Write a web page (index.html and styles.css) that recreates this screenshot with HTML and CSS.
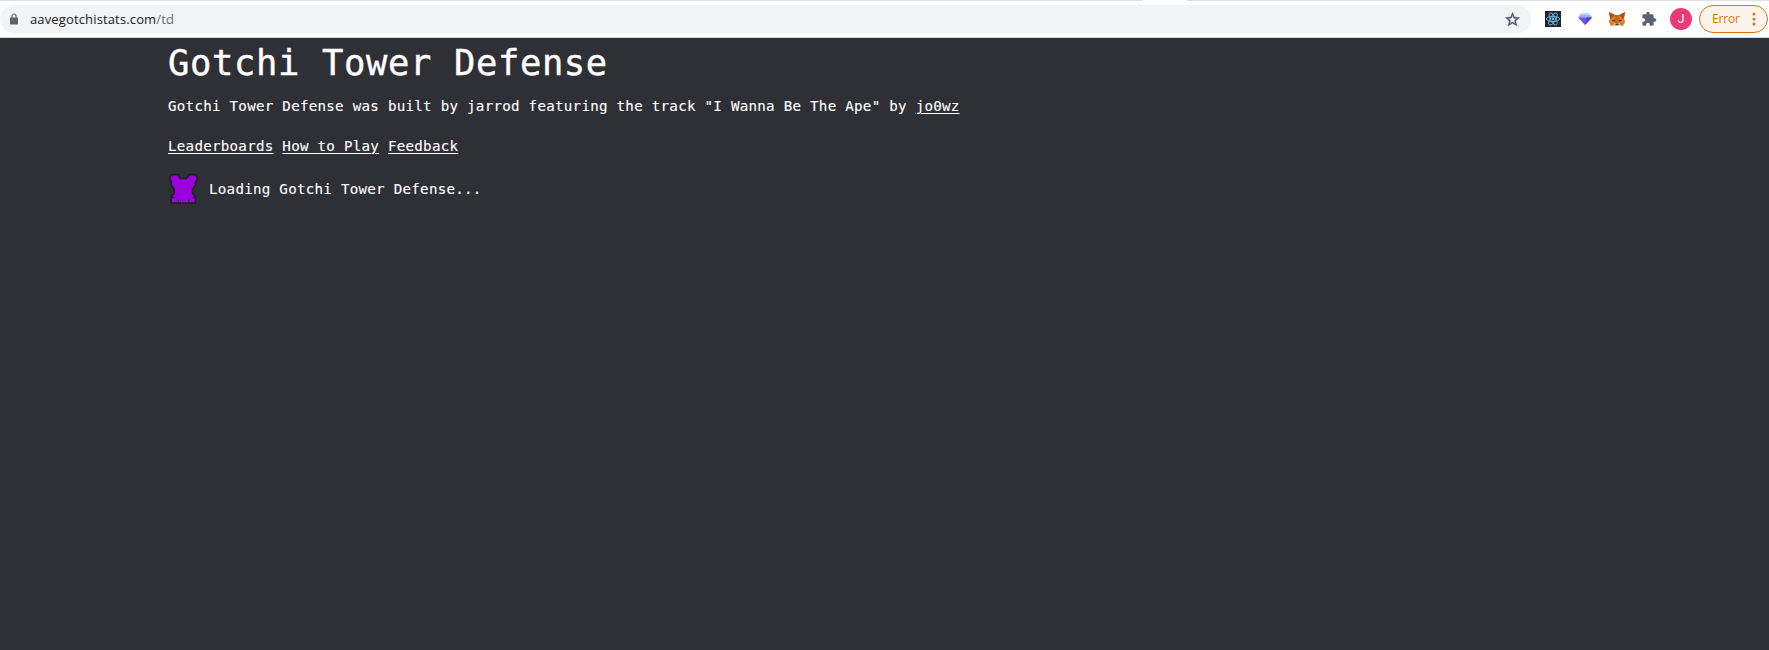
FILE: index.html
```html
<!DOCTYPE html>
<html lang="en">
<head>
<meta charset="utf-8">
<title>Gotchi Tower Defense</title>
<link rel="stylesheet" href="styles.css">
</head>
<body>
<header class="browser">
  <div class="tabs"><span class="tab"></span></div>
  <div class="toolbar">
    <div class="omnibox">
      <svg class="lock" viewBox="0 0 8 12"><path d="M2 5V3a2 2 0 0 1 4 0v2" fill="none" stroke="#5f6368" stroke-width="1.2"/><rect y="4.5" width="8" height="7" rx=".7" fill="#5f6368"/></svg>
      <span class="url">aavegotchistats.com<span class="path">/td</span></span>
      <svg class="star" viewBox="0 0 24 24"><path fill="#50596a" stroke="#50596a" stroke-width=".6" d="M22 9.24l-7.19-.62L12 2 9.190 8.630 2 9.240l5.460 4.730L5.820 21 12 17.270 18.180 21l-1.630-7.030L22 9.240zM12 15.400l-3.760 2.270 1-4.280-3.320-2.880 4.380-.38L12 6.100l1.710 4.040 4.380.38-3.320 2.880 1 4.280L12 15.400z"/></svg>
    </div>
    <div class="extensions">
      <svg viewBox="0 0 16 16"><rect width="16" height="16" fill="#20232a"/><g fill="none" stroke="#65b9df" stroke-width=".95"><ellipse cx="8" cy="8" rx="6.7" ry="2.6"/><ellipse cx="8" cy="8" rx="6.7" ry="2.6" transform="rotate(60 8 8)"/><ellipse cx="8" cy="8" rx="6.7" ry="2.6" transform="rotate(120 8 8)"/></g><circle cx="8" cy="8" r="1.4" fill="#65b9df"/></svg>
      <svg viewBox="0 0 16 16"><path fill="#b9d8fb" d="M4 2h8l3 4H1z"/><path fill="#8eb7f8" d="M1 6l3-2h8l3 2-2 1H3z"/><path fill="#7354e8" d="M1 6.500h14l-7 7.500z"/><path fill="#5637cf" d="M10 6.500h5l-7 7.500z"/></svg>
      <svg viewBox="0 0 16 16"><path fill="#e2801f" d="M0 1l6 3h4l6-3-1 6 1 4-2 4-4-1-1 1H7l-1-1-4 1-2-4 1-4z"/><path fill="#a75420" d="M0 1l6 3-4 4-1-1zM16 1l-6 3 4 4 1-1z"/><path fill="#c8671e" d="M6 4h4l1 6-2 2H7l-2-2z"/><path fill="#3b3c43" d="M3.5 8.5l2.5 1v1.2l-2.5-1zM12.500 8.500l-2.500 1v1.200l2.500-1z"/><path fill="#d9b99a" d="M5 12h6v2l-1.500 1h-3L5 14z"/><path fill="#3b3c43" d="M6.500 12.500h3V14h-3z"/></svg>
      <svg class="puzzle" viewBox="0 0 24 24"><path fill="#5b6472" d="M20.500 11H19V7c0-1.100-.9-2-2-2h-4V3.500a2.500 2.500 0 0 0-5 0V5H4c-1.100 0-2 .9-2 2v3.800h1.500a2.700 2.700 0 0 1 0 5.400H2V20c0 1.100.9 2 2 2h3.800v-1.500a2.700 2.700 0 0 1 5.400 0V22H17c1.100 0 2-.9 2-2v-4h1.500a2.500 2.500 0 0 0 0-5z"/></svg>
    </div>
    <span class="avatar">J</span>
    <div class="error"><span>Error</span><svg viewBox="0 0 4 14"><g fill="#d5771b"><circle cx="2" cy="2" r="1.500"/><circle cx="2" cy="7" r="1.500"/><circle cx="2" cy="12" r="1.500"/></g></svg></div>
  </div>
</header>
<main class="page">
  <h1>Gotchi Tower Defense</h1>
  <p class="intro">Gotchi Tower Defense was built by jarrod featuring the track "I Wanna Be The Ape" by <a href="#">jo0wz</a></p>
  <nav class="links"><a href="#">Leaderboards</a> <a href="#">How to Play</a> <a href="#">Feedback</a></nav>
  <div class="loading">
    <svg viewBox="0 0 32 32"><path fill="#9b00df" stroke="#1d1e22" stroke-width="1.6" stroke-linejoin="round" d="M4 1.800h6l1 1.500 1.500 2.200h6L20 3.300l1-1.500h6l2 2v3l-1.500 2V12l-1.500 2-1.500 2v4l1 1.500 2 2.500v6H3V24l2-2.500 1-1.500v-4l-1.500-2L3 12l.5-3.200L2 6.800v-3z"/><path stroke="#1d1e22" d="M3 24.500h3M25 24.500h3M10.500 26v4M20.500 26v4"/></svg>
    <span>Loading Gotchi Tower Defense...</span>
  </div>
</main>
</body>
</html>
```
FILE: styles.css
```css
* { box-sizing: border-box; }
body { margin: 0; background: #2f3036; color: #fff; height: 650px; overflow: hidden; }
svg { display: block; flex: none; }
.browser { height: 38px; background: #fff; border-bottom: 1px solid #d3d5d9; font-family: "Open Sans", "Noto Sans", sans-serif; }
.tabs { height: 1px; background: #dee1e6; display: flex; padding-left: 1143px; }
.tab { width: 44px; background: #fff; }
.toolbar { display: flex; align-items: center; height: 28px; margin-top: 4px; padding-right: 1px; }
.omnibox { width: 1531px; height: 28px; flex: none; background: #f1f3f4; border-radius: 14px; display: flex; align-items: center; padding: 0 10px; }
.lock { width: 8px; height: 12px; }
.url { margin-left: 12px; flex: 1; font-size: 13px; letter-spacing: 0.14px; color: #202124; line-height: 28px; }
.path { color: #6b7075; }
.star { width: 17px; height: 17px; }
.extensions { display: flex; gap: 16px; margin-left: 14px; }
.extensions svg { width: 16px; height: 16px; }
.avatar { width: 22px; height: 22px; flex: none; border-radius: 50%; background: #e93b77; margin-left: 13px; text-align: center; font-family: Roboto, sans-serif; font-size: 12px; line-height: 23px; }
.error { width: 69px; height: 28px; margin-left: 7px; border: 1px solid #d5771b; border-radius: 14px; background: #fcf3ea; color: #d5771b; display: flex; align-items: center; justify-content: space-between; padding: 0 11px 0 12px; font-size: 12px; letter-spacing: -0.2px; line-height: 26px; flex: none; }
.error span { padding-bottom: 1px; }
.error svg { width: 4px; height: 14px; }
.page { padding-left: 168px; font-family: "DejaVu Sans Mono", monospace; font-size: 14.200px; letter-spacing: 0.254px; line-height: 24px; -webkit-text-stroke: 0.1px #fff; }
h1 { margin: 0; padding-top: 1px; font-size: 35.500px; font-weight: 400; letter-spacing: 0.620px; line-height: 48px; -webkit-text-stroke: 0.4px #fff; }
.intro { margin: 7px 0 0; }
.links { margin-top: 16px; }
.page a { color: #fff; text-underline-offset: 2px; text-decoration-thickness: 1px; }
.loading { display: flex; align-items: center; gap: 9px; margin-top: 15px; }
.loading svg { width: 32px; height: 32px; }
```
